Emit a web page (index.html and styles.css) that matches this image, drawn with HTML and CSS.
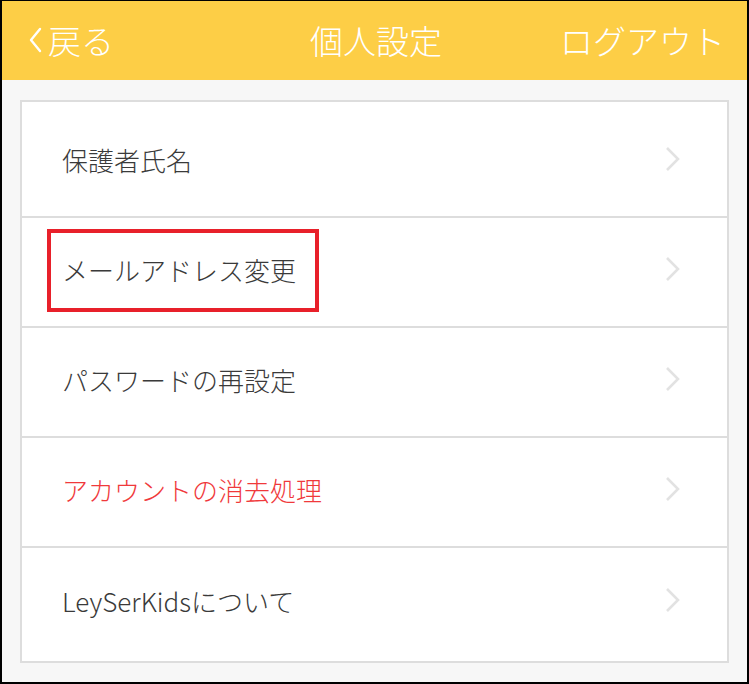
FILE: index.html
```html
<!DOCTYPE html>
<html lang="ja">
<head>
    <meta charset="UTF-8">
    <meta name="viewport" content="width=device-width, initial-scale=1.0">
    <title>個人設定</title>
    <link rel="stylesheet" href="styles.css">
</head>
<body>
    <div class="frame">
        <header class="nav-bar">
            <a class="nav-back" href="#">
                <svg class="back-icon" width="16" height="26" viewBox="0 0 16 26">
                    <path d="M13 2 L4 13 L13 24" fill="none" stroke="#fff" stroke-width="2.4" stroke-linecap="round" stroke-linejoin="round"/>
                </svg>戻る
            </a>
            <div class="nav-title">個人設定</div>
            <a class="nav-logout" href="#">ログアウト</a>
        </header>

        <div class="settings">
            <ul class="settings-list">
                <li class="settings-item">
                    <span class="label">保護者氏名</span>
                    <svg class="chevron" width="16" height="26" viewBox="0 0 16 26"><path d="M2 2 L13 13 L2 24" fill="none" stroke="#e2e2e2" stroke-width="2.6"/></svg>
                </li>
                <li class="settings-item">
                    <span class="label">メールアドレス変更</span>
                    <svg class="chevron" width="16" height="26" viewBox="0 0 16 26"><path d="M2 2 L13 13 L2 24" fill="none" stroke="#e2e2e2" stroke-width="2.6"/></svg>
                    <div class="highlight"></div>
                </li>
                <li class="settings-item">
                    <span class="label">パスワードの再設定</span>
                    <svg class="chevron" width="16" height="26" viewBox="0 0 16 26"><path d="M2 2 L13 13 L2 24" fill="none" stroke="#e2e2e2" stroke-width="2.6"/></svg>
                </li>
                <li class="settings-item">
                    <span class="label danger">アカウントの消去処理</span>
                    <svg class="chevron" width="16" height="26" viewBox="0 0 16 26"><path d="M2 2 L13 13 L2 24" fill="none" stroke="#e2e2e2" stroke-width="2.6"/></svg>
                </li>
                <li class="settings-item">
                    <span class="label">LeySerKidsについて</span>
                    <svg class="chevron" width="16" height="26" viewBox="0 0 16 26"><path d="M2 2 L13 13 L2 24" fill="none" stroke="#e2e2e2" stroke-width="2.6"/></svg>
                </li>
            </ul>
        </div>
    </div>
</body>
</html>
```

FILE: styles.css
```css
* {
    box-sizing: border-box;
}
body {
    margin: 0;
    padding: 0;
    font-family: "Noto Sans CJK JP", "Noto Sans", sans-serif;
    background: #fff;
}
.frame {
    width: 749px;
    height: 684px;
    border: 2px solid #000;
    border-top-width: 1px;
    background: #f7f7f7;
    display: flex;
    flex-direction: column;
}
.nav-bar {
    height: 79px;
    background-color: #fdce46;
    display: flex;
    align-items: center;
    justify-content: space-between;
    padding: 0 22px 2px 25px;
    color: #fff;
    font-size: 33px;
    font-weight: 300;
}
.nav-bar a {
    color: #fff;
    text-decoration: none;
}
.nav-back {
    display: flex;
    align-items: center;
    width: 165px;
}
.back-icon {
    margin-right: 5px;
}
.nav-title {
    flex: 1;
    text-align: center;
}
.nav-logout {
    width: 165px;
    text-align: right;
}
.settings {
    padding: 20px 18px 19px;
}
.settings-list {
    list-style: none;
    margin: 0;
    padding: 6px 0 3px;
    background: #fff;
    border: 2px solid #ddd;
}
.settings-item {
    position: relative;
    height: 110px;
    display: flex;
    align-items: center;
    justify-content: space-between;
    padding: 0 46px 6px 40px;
    border-bottom: 2px solid #ddd;
    font-size: 26px;
    font-weight: 300;
    color: #3a3a3a;
}
.settings-item:last-child {
    border-bottom: none;
}
.danger {
    color: #f0393b;
}
.highlight {
    position: absolute;
    left: 25px;
    top: 11px;
    width: 272px;
    height: 83px;
    border: 4px solid #e8202a;
}
```
